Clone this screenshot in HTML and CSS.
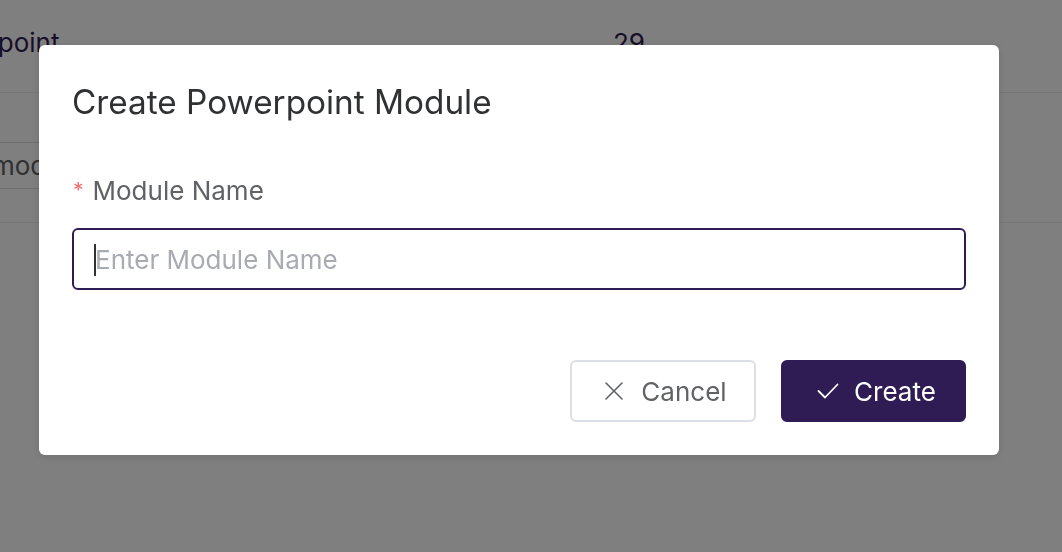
FILE: index.html
```html
<!DOCTYPE html>
<html lang="en">
<head>
<meta charset="utf-8">
<title>Create Powerpoint Module</title>
<link rel="stylesheet" href="styles.css">
</head>
<body>
<div class="page">
  <div class="table">
    <div class="row row-first">
      <span class="cell cell-name">Powerpoint</span>
      <span class="cell cell-count">29</span>
    </div>
    <div class="row row-second">
      <div class="search">module</div>
    </div>
  </div>
</div>

<div class="overlay">
  <div class="dialog" role="dialog" aria-labelledby="dlg-title">
    <h2 class="dialog-title" id="dlg-title">Create Powerpoint Module</h2>
    <div class="form-item">
      <label class="form-label" for="module-name"><span class="required">*</span>Module Name</label>
      <div class="input-wrap">
        <span class="caret"></span>
        <input class="input" id="module-name" type="text" placeholder="Enter Module Name">
      </div>
    </div>
    <div class="dialog-footer">
      <button class="btn btn-cancel" type="button">
        <svg class="icon" width="18" height="18" viewBox="0 0 18 18" aria-hidden="true"><path d="M1 1 L17 17 M17 1 L1 17" fill="none" stroke="currentColor" stroke-width="1.6" stroke-linecap="round"/></svg>
        <span>Cancel</span>
      </button>
      <button class="btn btn-create" type="button">
        <svg class="icon" width="22" height="16" viewBox="0 0 22 16" aria-hidden="true"><path d="M1.5 8 L8 14.5 L20.5 1.5" fill="none" stroke="currentColor" stroke-width="1.8" stroke-linecap="round" stroke-linejoin="round"/></svg>
        <span>Create</span>
      </button>
    </div>
  </div>
</div>
</body>
</html>
```

FILE: styles.css
```css
* { box-sizing: border-box; }
html, body { margin: 0; padding: 0; }
body {
  width: 1062px;
  height: 552px;
  overflow: hidden;
  background: #ffffff;
  font-family: Inter, "Noto Sans", sans-serif;
}

/* underlying page */
.page {
  overflow: hidden;
  height: 552px;
}
.table {
  margin-left: -80px;
}
.row {
  display: flex;
  align-items: center;
  border-bottom: 1px solid #eceff4;
}
.row-first {
  height: 93px;
  align-items: flex-start;
  padding-top: 26px;
}
.cell {
  font-size: 26px;
  color: #2f1c54;
  line-height: 34px;
}
.cell-name { width: 693px; }
.row-second {
  height: 130px;
  align-items: flex-start;
  padding-top: 49px;
}
.search {
  margin-left: 59px;
  width: 220px;
  height: 47px;
  border: 1px solid #dcdfe6;
  border-radius: 4px;
  font-size: 26px;
  line-height: 45px;
  padding-left: 12px;
  color: #606266;
}

/* overlay + dialog */
.overlay {
  position: fixed;
  inset: 0;
  background: rgba(0, 0, 0, 0.5);
  padding: 45px 0 0 39px;
}
.dialog {
  width: 960px;
  height: 410px;
  background: #ffffff;
  border-radius: 6px;
  padding: 37px 33px 33px;
  box-shadow: 0 2px 10px rgba(0, 0, 0, 0.12);
  display: flex;
  flex-direction: column;
}
.dialog-title {
  margin: 0;
  font-size: 33.3px;
  font-weight: 400;
  line-height: 40px;
  color: #303133;
}
.form-item {
  margin-top: 53px;
  display: flex;
  flex-direction: column;
}
.form-label {
  font-size: 26px;
  line-height: 32px;
  color: #606266;
  display: flex;
  align-items: center;
}
.required {
  color: #f56c6c;
  margin-right: 9px;
  margin-left: 1px;
  font-size: 21px;
}
.input-wrap {
  margin-top: 21px;
  height: 62px;
  border: 2px solid #2f1c54;
  border-radius: 6px;
  display: flex;
  align-items: center;
  padding-left: 20px;
  position: relative;
}
.caret {
  position: absolute;
  left: 20px;
  top: 14px;
  width: 2px;
  height: 32px;
  background: #303133;
}
.input {
  border: none;
  outline: none;
  background: transparent;
  width: 100%;
  height: 100%;
  font-family: inherit;
  font-size: 26px;
  color: #303133;
  padding: 0 0 0 1px;
}
.input::placeholder {
  color: #a8abb2;
}
.dialog-footer {
  margin-top: auto;
  display: flex;
  justify-content: flex-end;
  gap: 25px;
}
.btn {
  height: 62px;
  border-radius: 6px;
  font-family: inherit;
  font-size: 26px;
  display: flex;
  align-items: center;
  justify-content: center;
  cursor: pointer;
  padding: 0 0 0 6px;
}
.btn-cancel {
  width: 186px;
  gap: 18px;
  background: #ffffff;
  border: 2px solid #dcdfe6;
  color: #606266;
}
.btn-create {
  width: 185px;
  gap: 15px;
  background: #2f1c54;
  border: 2px solid #2f1c54;
  color: #ffffff;
}
.icon { display: block; flex: none; }
```
